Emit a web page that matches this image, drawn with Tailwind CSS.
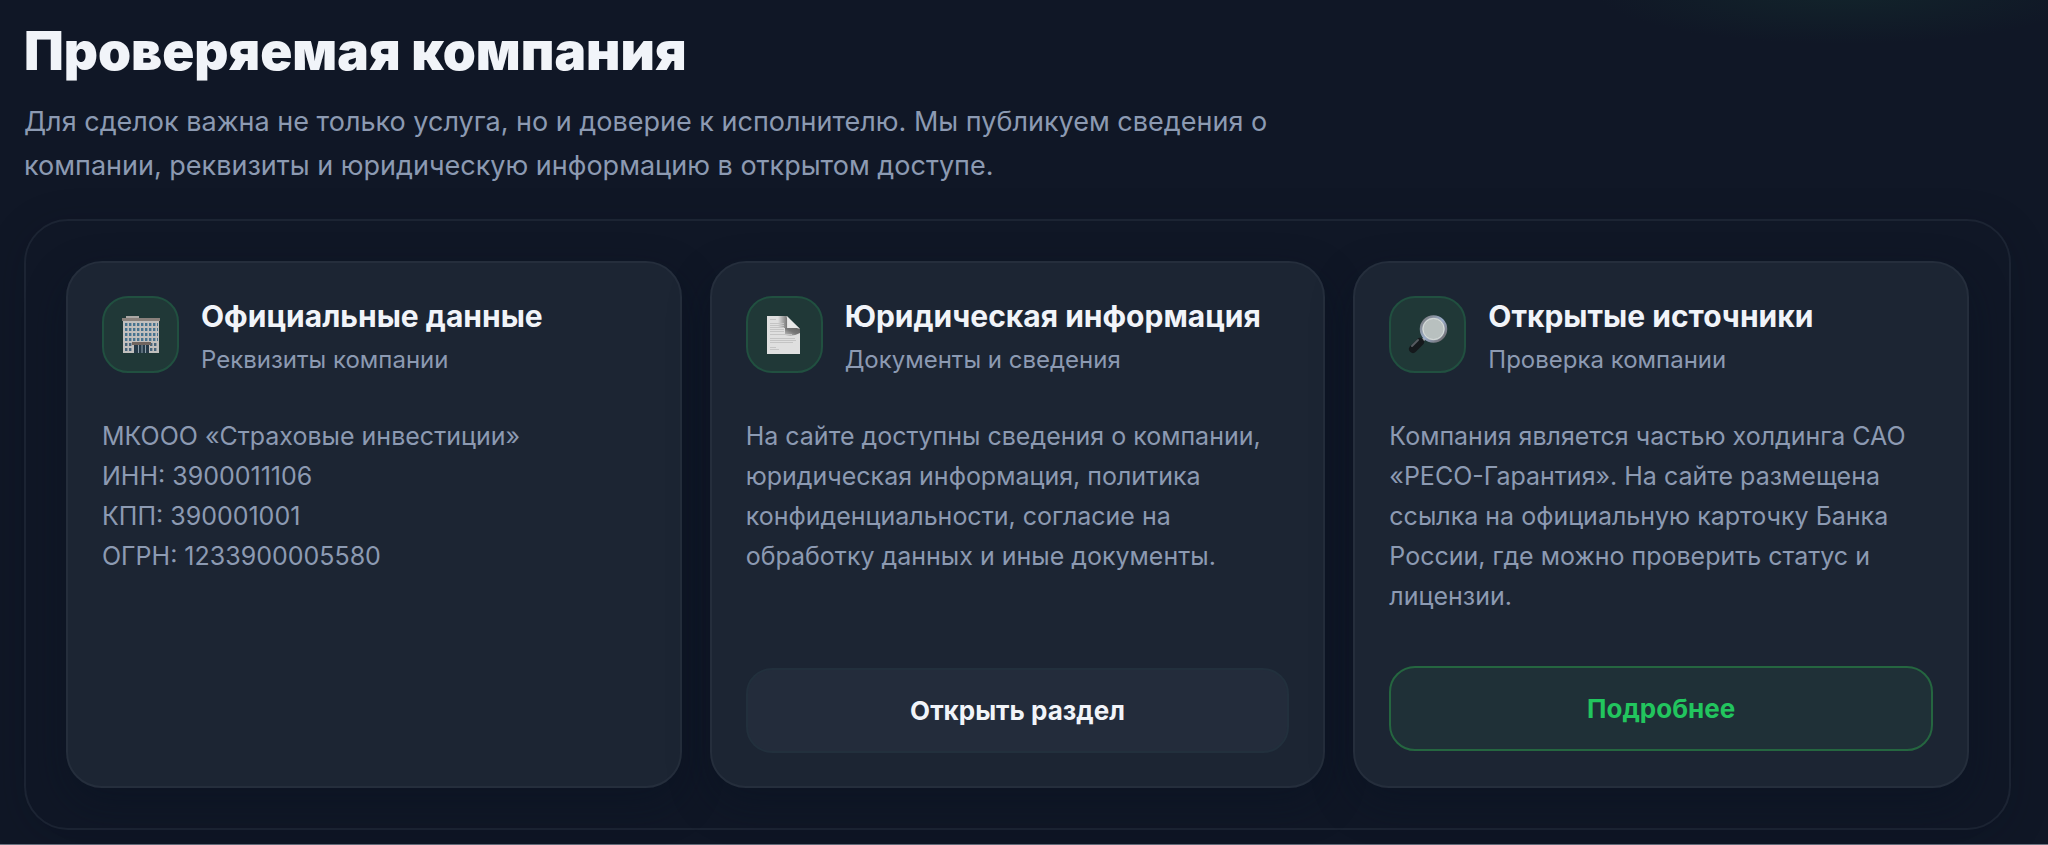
<!DOCTYPE html>
<html lang="ru">
<head>
<meta charset="utf-8">
<meta name="viewport" content="width=device-width, initial-scale=1">
<title>Проверяемая компания</title>
<script src="https://cdn.jsdelivr.net/npm/@tailwindcss/browser@4"></script>
</head>
<body class="min-h-screen flex flex-col bg-[#101726] font-['Inter','Noto_Sans',sans-serif] text-[#8c9ab2] antialiased">
<main class="grow bg-[radial-gradient(250px_54px_at_90%_-10px,#12242b,transparent)] border-b border-[#6b7280] pt-4 pb-3.5 pl-6 pr-[37px]">
  <h1 class="text-[53px] leading-[70px] font-black text-[#f1f4f9]">Проверяемая компания</h1>
  <p class="mt-3.5 max-w-[1270px] text-[27px] leading-[44px]">Для сделок важна не только услуга, но и доверие к исполнителю. Мы публикуем сведения о компании, реквизиты и юридическую информацию в открытом доступе.</p>

  <section class="mt-[31px] grid grid-cols-1 lg:grid-cols-3 gap-7 rounded-[44px] border-2 border-[#1c2433] p-10 shadow-[0_8px_40px_rgba(5,15,30,0.2)]">
    <article class="flex flex-col rounded-[36px] border-2 border-[#252e3c] bg-[#1c2533] px-[34px] py-[33px] shadow-[0_16px_40px_rgba(8,18,32,0.4)]">
      <header class="flex items-start gap-[22px]">
        <div class="size-[77px] shrink-0 grid place-items-center rounded-[26px] border-2 border-[#215040] bg-[#203837]">
          <svg class="size-10" viewBox="0 0 40 40" aria-hidden="true">
            <path fill="#aaa7a4" d="M5 1h13v4H5z"/>
            <path fill="#c1bfbd" d="M2 4h36v34H2z"/>
            <path fill="#89817c" d="M1 3h38v3H1z"/>
            <path stroke="#47738f" stroke-width="3" stroke-dasharray="2.4 1.6" d="M4 9.500h33M4 14.500h33M4 19.500h33M4 24.500h33"/>
            <path stroke="#47647a" stroke-width="3" stroke-dasharray="2.4 1.6" d="M4 29.500h8M29 29.500h8M4 34.500h8M29 34.500h8"/>
            <path fill="#263a48" d="M13 29h15v9H13z"/>
            <path fill="#70655f" d="M11 27h19v3H11z"/>
            <path stroke="#8fa0aa" d="M17.500 30v8M21 30v8M24.500 30v8"/>
          </svg>
        </div>
        <div>
          <h2 class="text-[30px] leading-[40px] font-bold text-[#f1f4f9]">Официальные данные</h2>
          <p class="mt-1.5 text-[24px] leading-[36px]">Реквизиты компании</p>
        </div>
      </header>
      <p class="mt-[38px] text-[25px] leading-[40px]">МКООО «Страховые инвестиции»<br>ИНН: 3900011106<br>КПП: 390001001<br>ОГРН: 1233900005580</p>
    </article>

    <article class="flex flex-col rounded-[36px] border-2 border-[#252e3c] bg-[#1c2533] px-[34px] py-[33px] shadow-[0_16px_40px_rgba(8,18,32,0.4)]">
      <header class="flex items-start gap-[22px]">
        <div class="size-[77px] shrink-0 grid place-items-center rounded-[26px] border-2 border-[#215040] bg-[#203837]">
          <svg class="size-10" viewBox="0 0 40 40" aria-hidden="true">
            <defs>
              <linearGradient id="fold" x1="0" y1="1" x2="1" y2="0"><stop offset="0" stop-color="#c4c4c4"/><stop offset=".5" stop-color="#777"/><stop offset="1" stop-color="#666"/></linearGradient>
              <linearGradient id="shade" x1="0" y1="0" x2="1" y2="0"><stop offset="0" stop-color="#dfdfdf"/><stop offset="1" stop-color="#777"/></linearGradient>
            </defs>
            <path fill="#dfdfdf" d="M3 1h20l13 13v25H3z"/>
            <path fill="url(#shade)" d="M14 1h9v12h-9z"/>
            <path fill="url(#fold)" d="M21 13h15v5q-7 4-15 2z"/>
            <path fill="#e8e8e8" d="M22 1q3 4 2 12 8-1 12 1z"/>
            <path stroke="#c4c4c4" stroke-width="1" d="M6 4.500h6M6 8.500h14M6 10.500h14M6 12.500h14M6 14.500h14M6 16.500h14M6 19.500h22M6 23.500h25M6 25.500h26M6 27.500h23M6 32.500h6M6 34.500h9"/>
          </svg>
        </div>
        <div>
          <h2 class="text-[30px] leading-[40px] font-bold text-[#f1f4f9]">Юридическая информация</h2>
          <p class="mt-1.5 text-[24px] leading-[36px]">Документы и сведения</p>
        </div>
      </header>
      <p class="mt-[38px] mb-[50px] text-[25px] leading-[40px]">На сайте доступны сведения о компании, юридическая информация, политика конфиденциальности, согласие на обработку данных и иные документы.</p>
      <button type="button" class="mt-auto h-[85px] w-full rounded-[26px] border-2 border-[#22303d] bg-[#232c3b] text-[26px] font-bold text-[#f1f4f9]">Открыть раздел</button>
    </article>

    <article class="flex flex-col rounded-[36px] border-2 border-[#252e3c] bg-[#1c2533] px-[34px] pt-[33px] pb-[35px] shadow-[0_16px_40px_rgba(8,18,32,0.4)]">
      <header class="flex items-start gap-[22px]">
        <div class="size-[77px] shrink-0 grid place-items-center rounded-[26px] border-2 border-[#215040] bg-[#203837]">
          <svg class="size-10" viewBox="0 0 40 40" aria-hidden="true">
            <defs>
              <linearGradient id="rim" x1="0" y1="0" x2="1" y2="1"><stop offset="0" stop-color="#777"/><stop offset=".5" stop-color="#9badca"/><stop offset="1" stop-color="#665f5e"/></linearGradient>
            </defs>
            <path stroke="#a7aaad" stroke-width="3" d="m12 28 5-5"/>
            <path stroke="#15191c" stroke-width="8" stroke-linecap="round" d="m5 34 7-7"/>
            <path stroke="#565b60" stroke-width="2" stroke-linecap="round" d="m4 31 6-6"/>
            <circle cx="25.500" cy="14" r="12.500" fill="#b8c0bf" stroke="url(#rim)" stroke-width="2.500"/>
            <circle cx="25.500" cy="14" r="10.500" fill="none" stroke="#d7dcdc" stroke-width="1"/>
          </svg>
        </div>
        <div>
          <h2 class="text-[30px] leading-[40px] font-bold text-[#f1f4f9]">Открытые источники</h2>
          <p class="mt-1.5 text-[24px] leading-[36px]">Проверка компании</p>
        </div>
      </header>
      <p class="mt-[38px] mb-[50px] text-[25px] leading-[40px]">Компания является частью холдинга САО «РЕСО-Гарантия». На сайте размещена ссылка на официальную карточку Банка России, где можно проверить статус и лицензии.</p>
      <button type="button" class="mt-auto h-[85px] w-full rounded-[26px] border-2 border-[#256640] bg-[#1f3037] text-[26px] font-bold text-[#22c55e]">Подробнее</button>
    </article>
  </section>
</main>
</body>
</html>
